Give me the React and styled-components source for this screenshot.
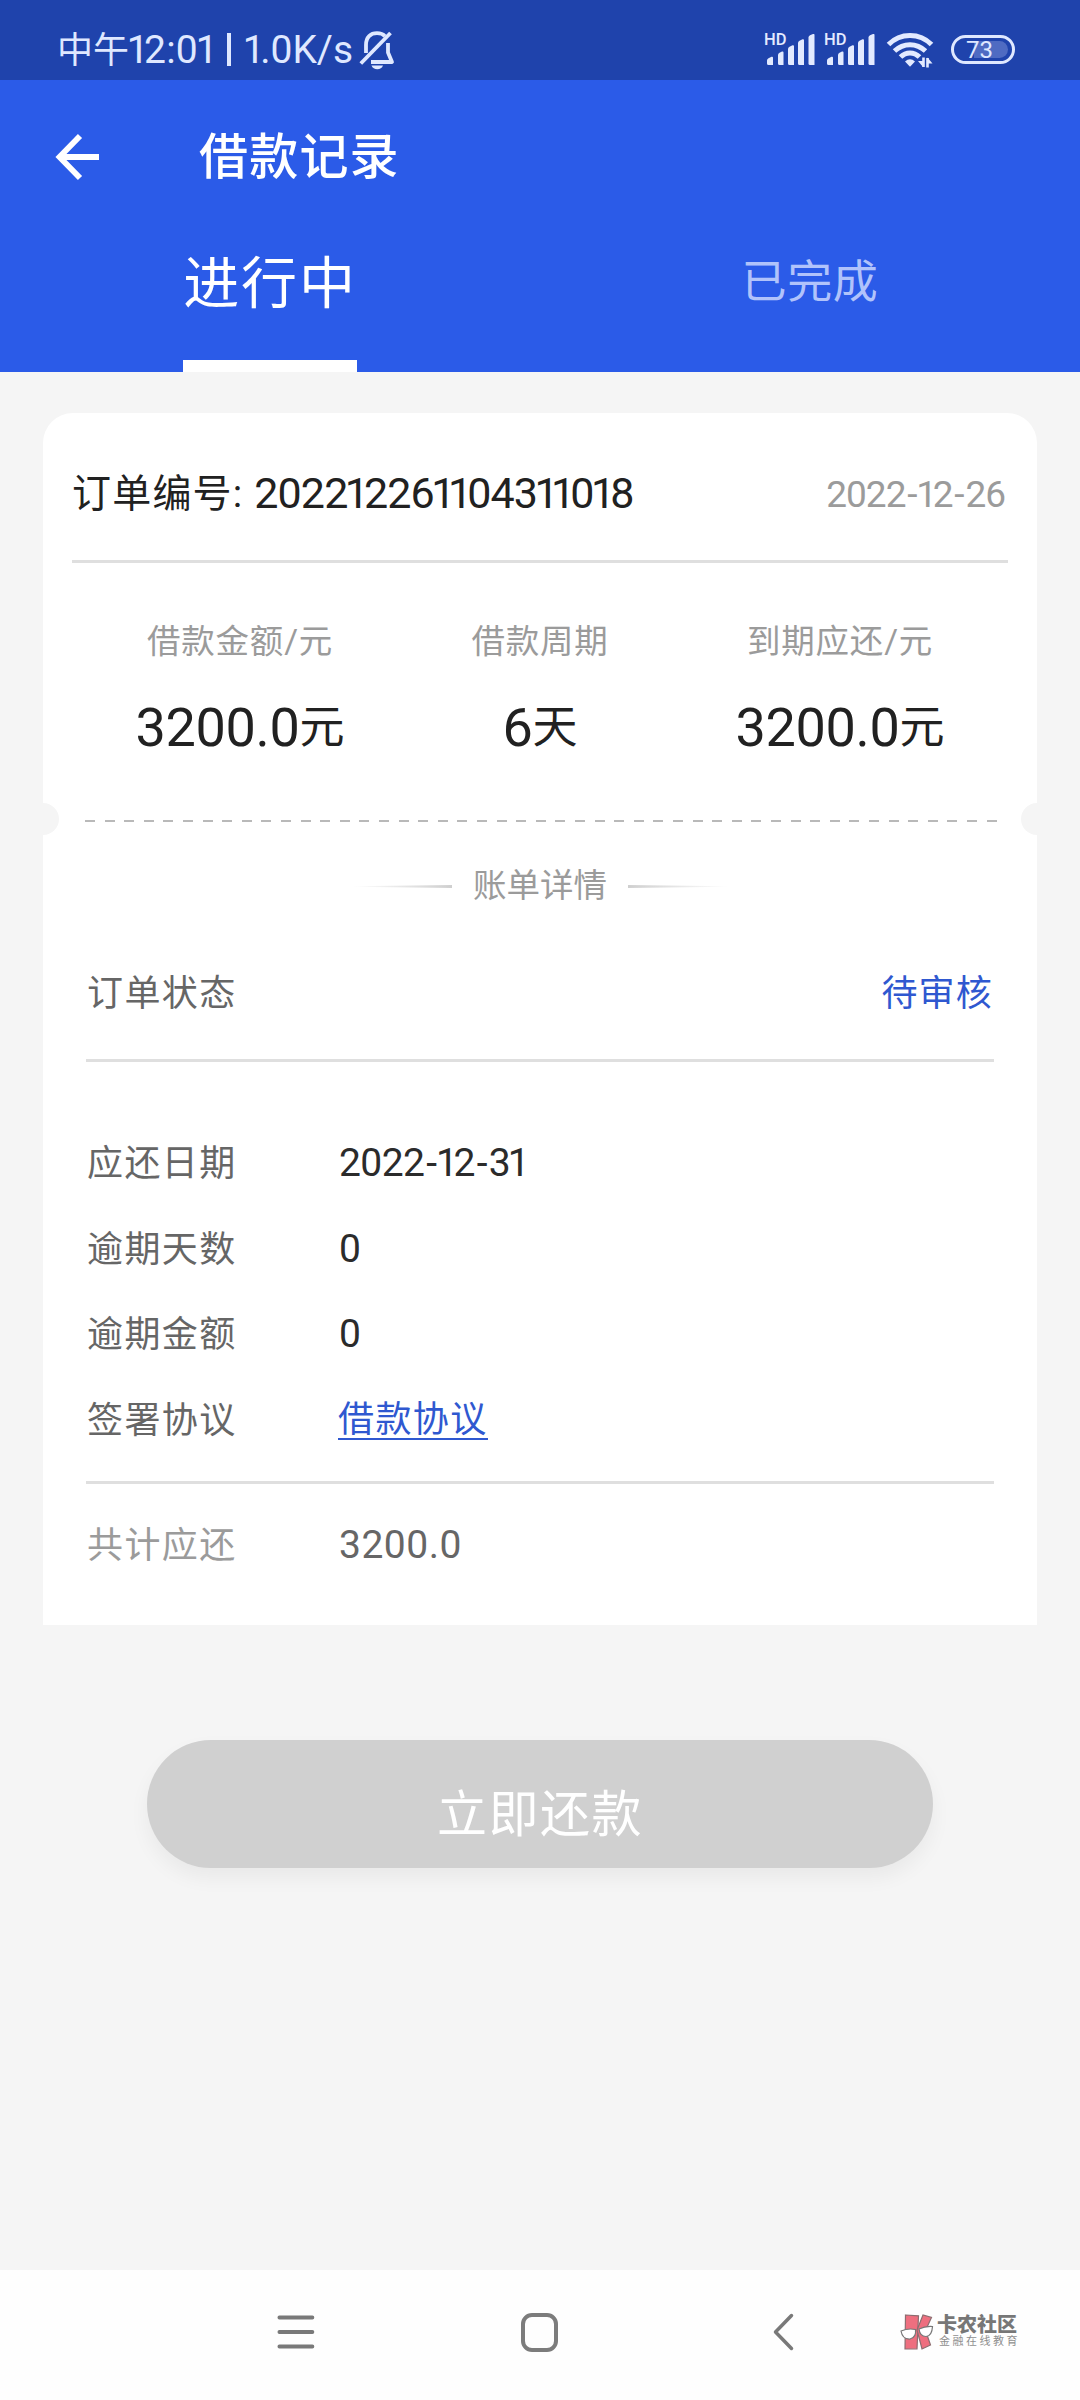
import { useState } from "react";
import styled, { createGlobalStyle } from "styled-components";


const tabs = ["进行中", "已完成"];

const summary = [
    { label: "借款金额/元", value: "3200.0", unit: "元" },
    { label: "借款周期", value: "6", unit: "天" },
    { label: "到期应还/元", value: "3200.0", unit: "元" },
];

const details = [
    { label: "应还日期", value: "2022-12-31" },
    { label: "逾期天数", value: "0" },
    { label: "逾期金额", value: "0" },
    { label: "签署协议", link: "借款协议" },
];

// digits with a narrow "1"
const Digits = ({ text, size, gap }) => (
    <Num $size={size} $gap={gap}>
        {text.split(/(1+|-)/).filter(Boolean).map((part, i) => {
            if (part[0] === "1") return <One key={i}>{part}</One>;
            if (part === "-") return <Dash key={i}>-</Dash>;
            return part;
        })}
    </Num>
);

const BellOff = () => (
    <svg width="36" height="40" viewBox="0 0 36 40" fill="none" stroke="#dfe8ff" strokeWidth="3.8" strokeLinejoin="round">
        <path d="M7 23V15C7 7 11.5 3.2 18 3.2c3.500 0 6.200 1 8 3" />
        <path d="M29 13v9.500L33 32H12" />
        <path d="M1.800 33.500L31.500 3" />
        <path d="M12.500 35.500h11.500c-1 2.700-3 3.700-5.700 3.700s-4.800-1-5.800-3.700z" fill="#dfe8ff" stroke="none" />
    </svg>
);

const Signal = () => (
    <SignalBox>
        <span>HD</span>
        <svg width="50" height="32" viewBox="0 0 50 32" fill="#e3eaff">
            <path d="M1 26.500q0-1.500 1.500-2.200l3-1.500q1.500-.5 1.500 1V31H2.500Q1 31 1 29.500z" />
            <path d="M12 21q0-1.500 1.500-2.200l2.500-1.300q1.500-.5 1.500 1V31H13.500Q12 31 12 29.500z" />
            <path d="M22 15q0-1.500 1.500-2.200l3-1.500q1.500-.5 1.500 1V31H23.500Q22 31 22 29.500z" />
            <path d="M32 9q0-1.500 1.500-2.200l3-1.500q1.500-.5 1.500 1V31H33.500Q32 31 32 29.500z" />
            <path d="M42.500 3.500q0-1.500 1.500-2.200l3-1.200q1.500-.5 1.500 1V31H44Q42.500 31 42.500 29.500z" />
        </svg>
    </SignalBox>
);

const Wifi = () => (
    <svg width="48" height="36" viewBox="0 0 48 36" fill="none" stroke="#e3eaff" strokeWidth="5">
        <path d="M2.500 12.500C14.500 .5 33.500 .5 45.500 12.500" />
        <path d="M8.500 19C17.500 10.500 30.500 10.500 39.500 19" />
        <path d="M14.500 25C20 19.500 28 19.500 33.500 25" />
        <path d="M19 29.500q5-4.500 10 0l-5 5.200z" fill="#e3eaff" stroke="none" />
        <path d="M37.500 25.500v9.500M41.500 35.500V26" strokeWidth="2.600" />
        <path d="M32 29h5v6zM46.500 31.500h-5v-6z" fill="#e3eaff" stroke="none" />
    </svg>
);

const BackArrow = () => (
    <svg width="46" height="48" viewBox="0 0 46 48" fill="none" stroke="#fff" strokeWidth="5.800">
        <path d="M44 24H5M25 3L4.500 24L25 45" />
    </svg>
);

const Brand = () => (
    <BrandBox>
        <svg width="34" height="36" viewBox="0 0 34 36">
            <g fill="#ee6f7f" stroke="#8d6d70" strokeWidth="1.200">
                <path d="M5.500 1l13 .8-1.500 33-12 .2z" />
                <path d="M17 16L23 1l8.500 2.500-6 13 5 14.500-8.500 4z" />
            </g>
            <path d="M1 17q7-3 14.500-1.500 1 8-5.500 9.500-7.500.5-9-8zM19 15q6-3 13.500-2.500-.5 9.500-6.500 10-6 0-7-7.500z" fill="#fff" stroke="#777" strokeWidth="1.200" />
        </svg>
        <div>
            <strong>卡农社区</strong>
            <small>金融在线教育</small>
        </div>
    </BrandBox>
);

const App = () => {

    const [active, setActive] = useState(0);

    return (
        <Screen>
            <GlobalStyle />
            <StatusBar>
                <StatusText>中午<Digits text="12:01" size={39} gap={0.2} /><Bar /><Digits text="1.0K/s" size={39} gap={0} /></StatusText>
                <BellOff />
                <StatusIcons>
                    <Signal />
                    <Signal />
                    <Wifi />
                    <Battery><i />73</Battery>
                </StatusIcons>
            </StatusBar>

            <Header>
                <TitleRow>
                    <BackArrow />
                    <h1>借款记录</h1>
                </TitleRow>
                <Tabs>
                    {tabs.map((tab, i) => (
                        <Tab key={tab} $active={i === active} onClick={() => setActive(i)}>{tab}</Tab>
                    ))}
                </Tabs>
            </Header>

            <Main>
                <Card>
                    <CardHead>
                        <OrderNo>订单编号: <Digits text="202212261104311018" size={43} gap={-0.9} /></OrderNo>
                        <OrderDate><Digits text="2022-12-26" size={37} gap={-1} /></OrderDate>
                    </CardHead>
                    <Summary>
                        {summary.map((item) => (
                            <div key={item.label}>
                                <SummaryLabel>{item.label}</SummaryLabel>
                                <SummaryValue><Digits text={item.value} size={54} gap={-0.3} /><Unit>{item.unit}</Unit></SummaryValue>
                            </div>
                        ))}
                    </Summary>

                    <Tear><Notch /><Dashes /><Notch $right /></Tear>

                    <BillTitle><Taper /><span>账单详情</span><Taper $right /></BillTitle>
                    <Bill>
                        <StatusRow>
                            <Label>订单状态</Label>
                            <State>待审核</State>
                        </StatusRow>
                        <DetailList>
                            {details.map((row) => (
                                <Row key={row.label}>
                                    <Label>{row.label}</Label>
                                    {row.link
                                        ? <Agreement>{row.link}</Agreement>
                                        : <Value><Digits text={row.value} size={39} gap={-0.6} /></Value>}
                                </Row>
                            ))}
                        </DetailList>
                        <TotalRow>
                            <Label $light>共计应还</Label>
                            <Value $light><Digits text="3200.0" size={39} gap={0.5} /></Value>
                        </TotalRow>
                    </Bill>
                </Card>
                <PayButton>立即还款</PayButton>
            </Main>

            <NavBar>
                <svg width="38" height="34" viewBox="0 0 38 34" stroke="#797979" strokeWidth="3.800" strokeLinecap="round">
                    <path d="M2.400 2.500h33M2.400 17h33M2.400 31.500h33" />
                </svg>
                <HomeKey />
                <svg width="22" height="38" viewBox="0 0 22 38" fill="none" stroke="#797979" strokeWidth="3.500" strokeLinecap="round" strokeLinejoin="round">
                    <path d="M18.500 2.500L2.500 19L18.500 35.500" />
                </svg>
                <Brand />
            </NavBar>
        </Screen>
    )

}

export default App;

const GlobalStyle = createGlobalStyle`
* { box-sizing: border-box; }
body {
    margin: 0;
    background: #f5f5f5;
    font-family: Roboto, "Noto Sans CJK SC", sans-serif;
}
svg { display: block; flex: none; }
`

const Screen = styled.div`
width: 1080px;
height: 2400px;
display: flex;
flex-direction: column;
overflow: hidden;
`

const Num = styled.span`
font-size: ${(p) => p.$size}px;
letter-spacing: ${(p) => p.$gap}px;
`

const One = styled.span`
letter-spacing: -0.175em;
margin-left: -0.06em;
margin-right: 0.06em;
`

const Dash = styled.span`
margin: 0 0.05em;
`

const StatusBar = styled.div`
display: flex;
align-items: center;
height: 80px;
padding: 19px 65px 0 57px;
background: #1f43ac;
color: #dfe8ff;
`

const StatusText = styled.div`
width: 302px;
padding-top: 1px;
font-size: 36px;
line-height: 60px;
white-space: nowrap;
`

const Bar = styled.i`
display: inline-block;
width: 4px;
height: 33px;
margin: 0 14px 0 14px;
background: #dfe8ff;
vertical-align: -3px;
`

const StatusIcons = styled.div`
margin-left: auto;
display: flex;
align-items: center;
gap: 10px;
`

const SignalBox = styled.div`
position: relative;
span {
    position: absolute;
    left: -2px;
    top: -2px;
    font: 500 16.5px/16px Roboto, sans-serif;
    color: #e3eaff;
}
`

const Battery = styled.div`
position: relative;
z-index: 0;
width: 64px;
height: 29px;
margin-left: 7px;
padding-right: 7px;
border: 3px solid #dfe8ff;
border-radius: 15px;
font-size: 24px;
line-height: 24px;
text-align: center;
i {
    position: absolute;
    z-index: -1;
    inset: 3px 4px 3px 20px;
    border-radius: 0 9px 9px 0;
    background: #4f6bc2;
}
`

const Header = styled.div`
height: 292px;
background: #2b5be8;
color: #fff;
display: flex;
flex-direction: column;
justify-content: space-between;
`

const TitleRow = styled.div`
display: flex;
align-items: center;
gap: 98px;
height: 154px;
padding-left: 55px;

h1 {
    margin: 0 0 9px;
    font-size: 49px;
    font-weight: 500;
    letter-spacing: 1.2px;
}
`

const Tabs = styled.div`
display: grid;
grid-template-columns: 1fr 1fr;
height: 138px;
`

const Tab = styled.div`
justify-self: center;
width: 174px;
text-align: center;
border-bottom: 12px solid ${(p) => (p.$active ? "#fff" : "transparent")};
color: ${(p) => (p.$active ? "#fff" : "#b1c3fb")};
font-size: ${(p) => (p.$active ? 56 : 45)}px;
letter-spacing: ${(p) => (p.$active ? 1.8 : 0.6)}px;
line-height: ${(p) => (p.$active ? 100 : 98)}px;
white-space: nowrap;
`

const Main = styled.div`
flex: 1;
display: flex;
flex-direction: column;
align-items: center;
padding-top: 41px;
`

const Card = styled.div`
width: 994px;
height: 1212px;
background: #fff;
border-radius: 30px 30px 0 0;
`

const CardHead = styled.div`
display: flex;
justify-content: space-between;
align-items: center;
height: 150px;
margin: 0 29px;
padding-top: 13px;
border-bottom: 3px solid #dfdfdf;
`

const OrderNo = styled.div`
font-size: 39px;
letter-spacing: 1.2px;
line-height: 60px;
color: #212121;
white-space: nowrap;

${Num} {
    vertical-align: -1px;
}
`

const OrderDate = styled.div`
padding: 10px 3px 0 0;
line-height: 60px;
color: #9b9b9b;
`

const Summary = styled.div`
display: grid;
grid-template-columns: repeat(3, 300px);
justify-content: center;
height: 240px;
padding-top: 54px;
text-align: center;
`

const SummaryLabel = styled.div`
font-size: 33.5px;
letter-spacing: 0.8px;
line-height: 50px;
color: #9b9b9b;
`

const SummaryValue = styled.div`
margin-top: 31px;
font-size: 45px;
line-height: 60px;
color: #212121;
`

const Unit = styled.span`
line-height: 1;
vertical-align: 3px;
`

const Tear = styled.div`
display: flex;
justify-content: space-between;
align-items: center;
height: 32px;
`

const Notch = styled.div`
width: 16px;
height: 32px;
background: #f5f5f5;
border-radius: ${(p) => (p.$right ? "16px 0 0 16px" : "0 16px 16px 0")};
`

const Dashes = styled.div`
width: 912px;
height: 2px;
margin: 4px 0 0 2px;
background: repeating-linear-gradient(90deg, #b9b9b9 0 10px, transparent 10px 19.6px);
`

const BillTitle = styled.div`
display: flex;
justify-content: center;
align-items: center;
gap: 21px;
height: 50px;
margin-top: 25px;
font-size: 33.5px;
color: #9b9b9b;

span {
    margin-top: -5px;
}
`

const Taper = styled.i`
width: 100px;
height: 3px;
margin-top: 3px;
background: linear-gradient(${(p) => (p.$right ? 270 : 90)}deg, transparent, #cfcfcf);
clip-path: ${(p) => (p.$right ? "polygon(0 0, 100% 40%, 100% 60%, 0 100%)" : "polygon(0 40%, 100% 0, 100% 100%, 0 60%)")};
`

const Bill = styled.div`
margin: 0 43px;
`

const StatusRow = styled.div`
display: flex;
justify-content: space-between;
align-items: center;
height: 152px;
padding: 14px 1px 0;
border-bottom: 3px solid #dfdfdf;
`

const Label = styled.div`
width: 251px;
margin-top: -3px;
font-size: 36px;
letter-spacing: 1.4px;
color: ${(p) => (p.$light ? "#9b9b9b" : "#666")};
`

const State = styled.div`
margin-top: -3px;
font-size: 36px;
letter-spacing: 1.2px;
color: #2f58d0;
`

const DetailList = styled.div`
padding: 57px 0 20px;
border-bottom: 3px solid #dfdfdf;
`

const Row = styled.div`
display: flex;
align-items: center;
height: 85.6px;
padding-left: 1px;
`

const TotalRow = styled(Row)`
height: 118px;
`

const Value = styled.div`
padding: 11px 0 0 1px;
line-height: 50px;
color: ${(p) => (p.$light ? "#666" : "#2b2b2b")};
`

const Agreement = styled.a`
margin-top: 6px;
font-size: 36px;
letter-spacing: 1.4px;
line-height: 35px;
color: #2f58d0;
border-bottom: 2px solid #2f58d0;
`

const PayButton = styled.button`
width: 786px;
height: 128px;
margin-top: 115px;
padding: 12px 0 0;
border: none;
border-radius: 64px;
background: #d0d0d0;
box-shadow: 0 10px 20px rgba(0, 0, 0, 0.05);
color: #fff;
font: 50px Roboto, "Noto Sans CJK SC", sans-serif;
letter-spacing: 1.5px;
`

const NavBar = styled.div`
display: flex;
align-items: center;
height: 130px;
padding: 0 60px 6px 277px;
background: #fefefe;
`

const HomeKey = styled.div`
width: 37px;
height: 39px;
margin: 0 215px 0 206px;
border: 4px solid #7c7c7c;
border-radius: 11px;
`

const BrandBox = styled.div`
display: flex;
align-items: center;
gap: 3px;
margin-left: auto;

strong, small {
    display: block;
    white-space: nowrap;
}
strong {
    font-size: 20px;
    line-height: 20px;
    font-weight: 900;
    color: #777;
}
small {
    padding-left: 2px;
    font-size: 11px;
    line-height: 14px;
    letter-spacing: 2.5px;
    color: #8f8f8f;
}
`
